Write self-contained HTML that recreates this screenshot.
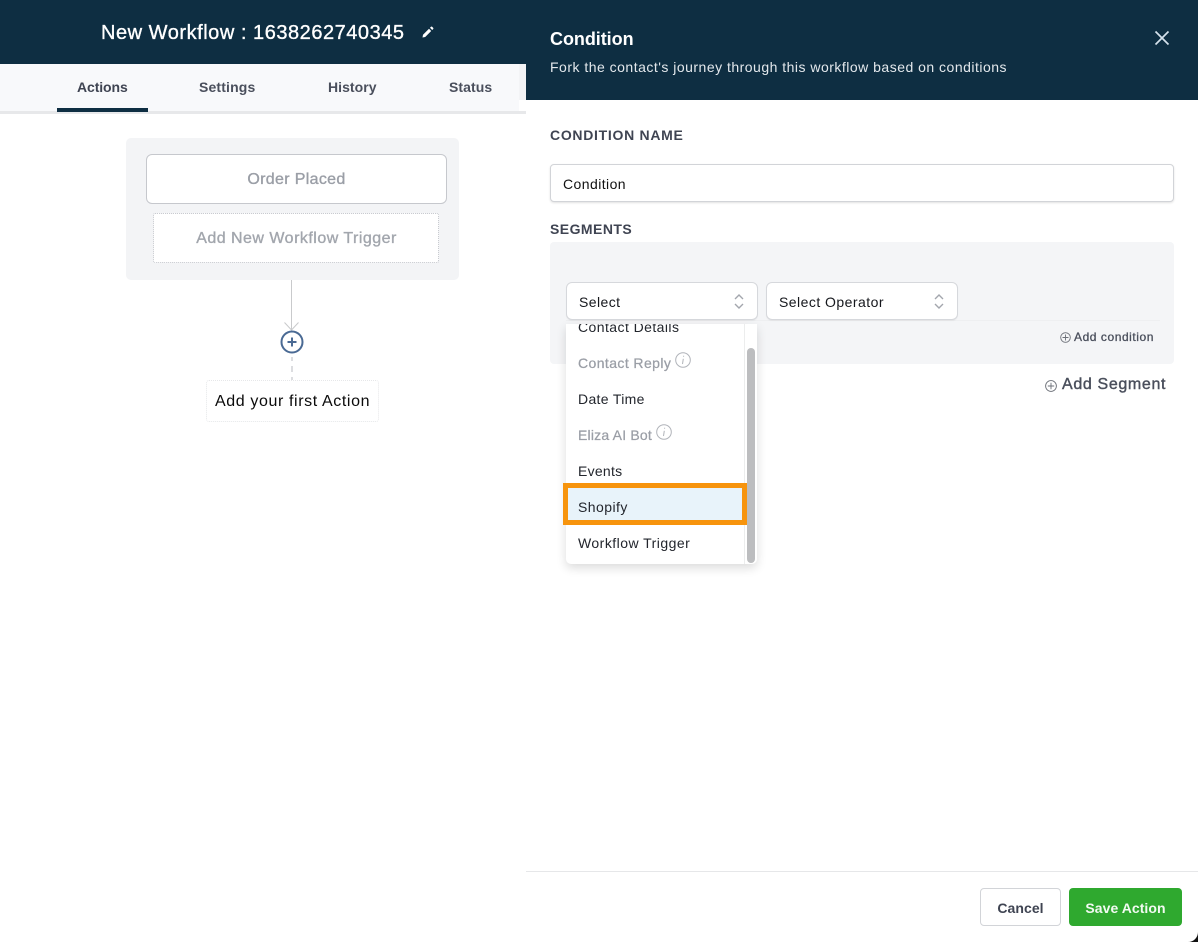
<!DOCTYPE html>
<html lang="en">
<head>
<meta charset="utf-8">
<title>Condition</title>
<style>
html,body{margin:0;padding:0;background:#fff}
#r{position:relative;width:1198px;height:942px;overflow:hidden;background:#fff;font-family:"Liberation Sans",sans-serif;color:#3c4250}
#r div,#r span.t{position:absolute;box-sizing:border-box}
.t{white-space:nowrap;line-height:20px;height:20px}
svg{position:absolute;overflow:visible}
.b{font-weight:700;-webkit-text-stroke:0}
</style>
</head>
<body>
<div id="r">
  <!-- left header -->
  <div style="left:0;top:0;width:526px;height:64px;background:#0e2e42"></div>
  <span class="t" style="left:101px;top:23px;font-size:20px;color:#fff;letter-spacing:.53px;-webkit-text-stroke:.35px #fff">New Workflow : 1638262740345</span>
  <svg style="left:421px;top:25px" width="14" height="14" viewBox="0 0 14 14"><path d="M1.500 12.500l.5-2.700 6-6 2.200 2.200-6 6zM9 2.800l1-1a.8.8 0 0 1 1.100 0l1.100 1.100a.8.8 0 0 1 0 1.100l-1 1z" fill="#fff"/></svg>

  <!-- tabs -->
  <div style="left:0;top:64px;width:519px;height:47px;background:#f8f9fb"></div>
  <div style="left:519px;top:64px;width:7px;height:36px;background:#f3f4f6"></div>
  <div style="left:0;top:111px;width:526px;height:3px;background:#e7e8ea"></div>
  <span class="t b" style="left:77px;top:77px;font-size:14px;color:#3f4452;letter-spacing:-.1px">Actions</span>
  <span class="t b" style="left:199px;top:77px;font-size:14px;color:#4a4f5c;letter-spacing:.15px">Settings</span>
  <span class="t b" style="left:328px;top:77px;font-size:14px;color:#4a4f5c;letter-spacing:.05px">History</span>
  <span class="t b" style="left:449px;top:77px;font-size:14px;color:#4a4f5c;letter-spacing:.07px">Status</span>
  <div style="left:57px;top:108px;width:91px;height:4px;background:#0e2e42"></div>

  <!-- trigger card -->
  <div style="left:126px;top:138px;width:333px;height:142px;background:#f3f4f6;border-radius:5px"></div>
  <div style="left:146px;top:154px;width:301px;height:50px;background:#fff;border:1px solid #c6c8cd;border-radius:6px"></div>
  <span class="t" style="left:146px;top:169px;width:301px;text-align:center;font-size:16px;color:#9a9ea6;-webkit-text-stroke:.35px #9a9ea6;letter-spacing:.33px;line-height:21px">Order Placed</span>
  <div style="left:153px;top:213px;width:286px;height:50px;background:#fff;border:1px dashed #f3f4f6;border-radius:2px;outline:1px dotted #c9cbd0;outline-offset:-1px"></div>
  <span class="t" style="left:153px;top:228px;width:287px;text-align:center;font-size:16px;color:#a2a6ad;-webkit-text-stroke:.35px #a2a6ad;letter-spacing:.48px;line-height:21px">Add New Workflow Trigger</span>

  <!-- connector -->
  <svg style="left:280px;top:280px" width="24" height="105" viewBox="0 0 24 105">
    <path d="M11.500 0V50M4.500 42.500L11.500 50L18.500 42.500" fill="none" stroke="#c9cacc" stroke-width="1"/>
    <circle cx="12" cy="62" r="10.500" fill="#fff" stroke="#4a6a94" stroke-width="2"/>
    <path d="M12 57.500V66.500M7.500 62H16.500" stroke="#4a6a94" stroke-width="2"/>
    <path d="M12 77V81M12 86V92M12 97V100" stroke="#d0d2d6" stroke-width="1.500"/>
  </svg>
  <div style="left:206px;top:380px;width:173px;height:42px;border:1px dotted #e6e7e9;border-radius:3px"></div>
  <span class="t" style="left:215px;top:391px;font-size:16px;color:#0a0a0a;letter-spacing:.61px;line-height:21px">Add your first Action</span>

  <!-- right panel -->
  <div style="left:526px;top:0;width:672px;height:100px;background:#0e2e42"></div>
  <span class="t b" style="left:550px;top:29px;font-size:18px;color:#fff;letter-spacing:-.05px">Condition</span>
  <span class="t" style="left:550px;top:57px;font-size:14px;color:#e3e8ec;letter-spacing:.49px">Fork the contact's journey through this workflow based on conditions</span>
  <svg style="left:1154px;top:30px" width="16" height="16" viewBox="0 0 16 16"><path d="M1.500 1.500L14.500 14.500M14.500 1.500L1.500 14.500" stroke="#d5e2ec" stroke-width="1.700" fill="none"/></svg>

  <span class="t b" style="left:550px;top:125px;font-size:14px;color:#3f4452;letter-spacing:.71px">CONDITION NAME</span>
  <div style="left:550px;top:164px;width:624px;height:38px;background:#fff;border:1px solid #d2d4d8;border-radius:4px;box-shadow:0 1px 2px rgba(0,0,0,.12)"></div>
  <span class="t" style="left:563px;top:174px;font-size:14px;color:#111;letter-spacing:.43px">Condition</span>

  <span class="t b" style="left:550px;top:219px;font-size:14px;color:#3f4452;letter-spacing:.45px">SEGMENTS</span>
  <div style="left:550px;top:242px;width:624px;height:122px;background:#f4f5f7;border-radius:4px"></div>
  <div style="left:566px;top:320px;width:594px;height:1px;background:#eeeff1"></div>

  <div style="left:566px;top:282px;width:192px;height:38px;background:#fff;border:1px solid #d6d8dc;border-radius:6px;box-shadow:0 1px 1px rgba(0,0,0,.05)"></div>
  <span class="t" style="left:579px;top:292px;font-size:14px;color:#15171c;letter-spacing:.43px">Select</span>
  <svg style="left:734px;top:294px" width="10" height="15" viewBox="0 0 10 15"><path d="M1 5L5 1L9 5M1 10L5 14L9 10" fill="none" stroke="#a3a6ad" stroke-width="1.400"/></svg>
  <div style="left:766px;top:282px;width:192px;height:38px;background:#fff;border:1px solid #d6d8dc;border-radius:6px;box-shadow:0 1px 1px rgba(0,0,0,.05)"></div>
  <span class="t" style="left:779px;top:292px;font-size:14px;color:#15171c;letter-spacing:.46px">Select Operator</span>
  <svg style="left:934px;top:294px" width="10" height="15" viewBox="0 0 10 15"><path d="M1 5L5 1L9 5M1 10L5 14L9 10" fill="none" stroke="#a3a6ad" stroke-width="1.400"/></svg>

  <svg style="left:1060px;top:332px" width="11" height="11" viewBox="0 0 11 11"><circle cx="5.500" cy="5.500" r="4.800" fill="none" stroke="#6c7078" stroke-width=".9"/><path d="M5.500 2.500V8.500M2.500 5.500H8.500" stroke="#6c7078" stroke-width=".9"/></svg>
  <span class="t" style="left:1074px;top:327px;font-size:12px;color:#4a4f5c;-webkit-text-stroke:.3px #4a4f5c;letter-spacing:.56px">Add condition</span>
  <svg style="left:1045px;top:380px" width="12" height="12" viewBox="0 0 12 12"><circle cx="6" cy="6" r="5.400" fill="none" stroke="#6c7078" stroke-width=".9"/><path d="M6 2.800V9.200M2.800 6H9.200" stroke="#6c7078" stroke-width=".9"/></svg>
  <span class="t" style="left:1062px;top:375px;font-size:16px;color:#4a4f5c;-webkit-text-stroke:.4px #4a4f5c;letter-spacing:.65px">Add Segment</span>

  <!-- dropdown -->
  <div style="left:566px;top:324px;width:191px;height:240px;background:#fff;border-radius:0 0 5px 5px;box-shadow:0 4px 10px rgba(0,0,0,.14);overflow:hidden">
    <span class="t" style="left:12px;top:-7px;font-size:14px;color:#22252c;letter-spacing:.43px">Contact Details</span>
    <span class="t" style="left:12px;top:29px;font-size:14px;color:#9a9ea6;-webkit-text-stroke:.25px #9a9ea6;letter-spacing:.41px">Contact Reply</span>
    <span class="t" style="left:12px;top:65px;font-size:14px;color:#22252c;letter-spacing:.33px">Date Time</span>
    <span class="t" style="left:12px;top:101px;font-size:14px;color:#9a9ea6;-webkit-text-stroke:.25px #9a9ea6;letter-spacing:.2px">Eliza AI Bot</span>
    <span class="t" style="left:12px;top:137px;font-size:14px;color:#22252c;letter-spacing:.27px">Events</span>
    <div style="left:0;top:162px;width:178px;height:36px;background:#e8f3fa"></div>
    <span class="t" style="left:12px;top:173px;font-size:14px;color:#22252c;letter-spacing:.45px">Shopify</span>
    <span class="t" style="left:12px;top:209px;font-size:14px;color:#22252c;letter-spacing:.47px">Workflow Trigger</span>
    <div style="left:178px;top:0;width:1px;height:240px;background:#eceded"></div>
    <div style="left:181px;top:24px;width:8px;height:215px;background:#bcbdbf;border-radius:4px"></div>
  </div>
  <svg style="left:675px;top:352px" width="16" height="16" viewBox="0 0 16 16"><circle cx="8" cy="8" r="7.300" fill="none" stroke="#b0b3b9"/><path d="M8.300 6.800L7.500 12M8.600 3.800V4.800" stroke="#b0b3b9" fill="none"/></svg>
  <svg style="left:656px;top:424px" width="16" height="16" viewBox="0 0 16 16"><circle cx="8" cy="8" r="7.300" fill="none" stroke="#b0b3b9"/><path d="M8.300 6.800L7.500 12M8.600 3.800V4.800" stroke="#b0b3b9" fill="none"/></svg>
  <!-- highlight -->
  <div style="left:563px;top:483px;width:184px;height:42px;border:5px solid #f7940d"></div>

  <!-- footer -->
  <div style="left:526px;top:871px;width:672px;height:1px;background:#e6e7e9"></div>
  <div style="left:980px;top:888px;width:81px;height:38px;background:#fff;border:1px solid #d2d4d8;border-radius:4px"></div>
  <span class="t b" style="left:980px;top:898px;width:81px;text-align:center;font-size:14px;color:#3f4452;letter-spacing:.05px">Cancel</span>
  <div style="left:1069px;top:888px;width:113px;height:38px;background:#2fa92f;border-radius:4px"></div>
  <span class="t b" style="left:1069px;top:898px;width:113px;text-align:center;font-size:14px;color:#f2faf2;letter-spacing:.05px">Save Action</span>
  <!-- rounded window corner -->
  <svg style="left:1188px;top:932px" width="10" height="10" viewBox="0 0 10 10"><path d="M10 0V10H0A10 10 0 0 0 10 0Z" fill="#111"/></svg>
</div>
</body>
</html>
